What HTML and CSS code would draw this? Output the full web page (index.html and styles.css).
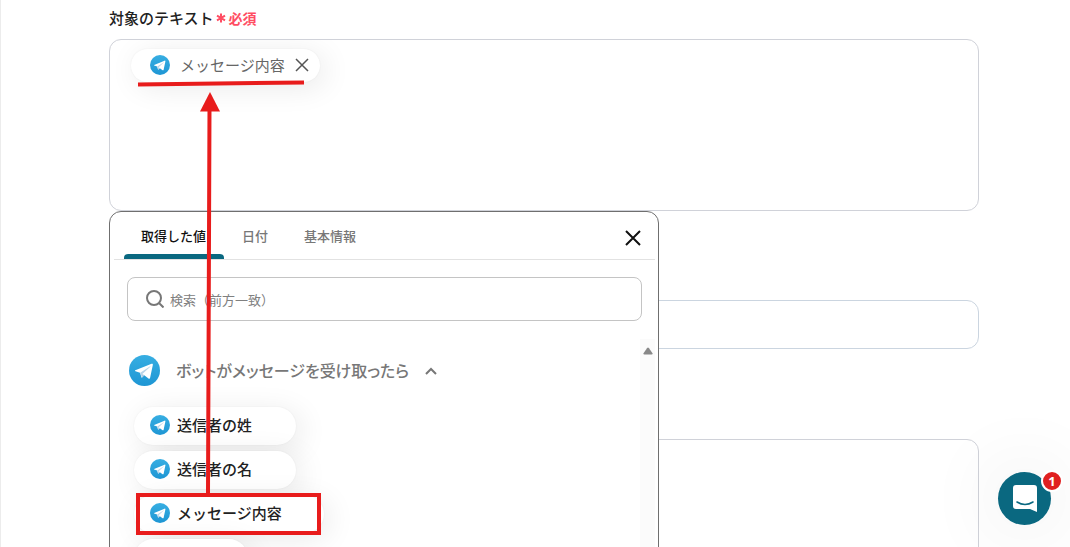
FILE: index.html
```html
<!DOCTYPE html>
<html lang="ja">
<head>
  <meta charset="UTF-8">
  <meta name="viewport" content="width=device-width, initial-scale=1.0">
  <title>対象のテキスト</title>
  <link rel="stylesheet" href="styles.css">
</head>
<body>
  <svg class="defs" aria-hidden="true">
    <defs>
      <linearGradient id="sky" x1="0" y1="0" x2="0" y2="1">
        <stop offset="0" stop-color="#37aee2"/>
        <stop offset="1" stop-color="#1e96d4"/>
      </linearGradient>
      <symbol id="telegram" viewBox="0 0 32 32">
        <circle cx="16" cy="16" r="16" fill="url(#sky)"/>
        <path d="M6.5 15.8 23.3 9c1-.3 1.500.2 1.300 1.200L21.800 23.500c-.2 1-.8 1.200-1.700.7L15.800 21l-2.200 2.200c-.3.300-.6.300-.8-.2l-1.400-4.800-4.700-1.500c-.7-.3-.7-.6-.2-.9z" fill="#fff"/>
        <path d="M11.600 18.200 21.500 11.800c.5-.3.8-.1.500.2L13.800 19.500 13.200 23.200z" fill="#b9d4e8"/>
        <path d="M13.800 19.500 15.800 21 13.200 23.200z" fill="#a3c5df"/>
      </symbol>
    </defs>
  </svg>

  <main class="form">
    <div class="label-row">
      <label for="target-search">対象のテキスト</label>
      <span class="required"><svg viewBox="0 0 10 10"><path d="M5 .5v9M1 2.700l8 4.600M9 2.700 1 7.300"/></svg>必須</span>
    </div>

    <div class="field">
      <div class="box editor">
        <div class="chip chip-selected">
          <svg class="chip-icon"><use href="#telegram"/></svg>
          <span>メッセージ内容</span>
          <button class="chip-remove" type="button" aria-label="削除">
            <svg viewBox="0 0 14 14"><path d="M1 1l12 12M13 1 1 13"/></svg>
          </button>
        </div>
      </div>

      <div class="panel">
        <div class="tabs">
          <button class="tab active" type="button">取得した値</button>
          <button class="tab" type="button">日付</button>
          <button class="tab" type="button">基本情報</button>
          <button class="close" type="button" aria-label="閉じる">
            <svg viewBox="0 0 16 16"><path d="M1 1l14 14M15 1 1 15"/></svg>
          </button>
        </div>
        <div class="search">
          <svg viewBox="0 0 18 18"><circle cx="8" cy="8" r="7"/><path d="M13 13l4.500 4.500"/></svg>
          <input id="target-search" type="text" placeholder="検索（前方一致）">
        </div>
        <div class="values">
          <div class="list">
            <button class="group" type="button">
              <svg class="group-icon"><use href="#telegram"/></svg>
              <span>ボットがメッセージを受け取ったら</span>
              <svg class="chevron" viewBox="0 0 12 8"><path d="M1 7l5-5 5 5"/></svg>
            </button>
            <button class="chip" type="button"><svg class="chip-icon"><use href="#telegram"/></svg>送信者の姓</button>
            <button class="chip" type="button"><svg class="chip-icon"><use href="#telegram"/></svg>送信者の名</button>
            <button class="chip" type="button"><svg class="chip-icon"><use href="#telegram"/></svg>メッセージ内容</button>
            <button class="chip chip-short" type="button" aria-label="値"><svg class="chip-icon"><use href="#telegram"/></svg></button>
          </div>
          <div class="scrollbar"><svg viewBox="0 0 10 8"><path d="M4 1.200q1-1.400 2 0l3.500 5q.5 1.300-.8 1.300H1.300Q0 7.500.5 6.200z"/></svg></div>
        </div>
      </div>
    </div>

    <input class="box line" type="text" aria-label="テキスト">
    <textarea class="box area" aria-label="内容"></textarea>
  </main>

  <button class="messenger" type="button" aria-label="チャット">
    <svg viewBox="0 0 24 27"><path d="M3 0h18q3 0 3 3v24l-7-3H3q-3 0-3-3V3q0-3 3-3z" fill="#fff"/><path d="M4 17q8 5 16 0" fill="none" stroke="#0a6880" stroke-width="1.500" stroke-linecap="round"/></svg>
    <span class="badge">1</span>
  </button>

  <!-- red guide marks over the form -->
  <svg class="marks" width="400" height="547" viewBox="0 0 400 547" aria-hidden="true">
    <path d="M138 84.500 304 82.500M209.500 108 208 494" stroke-width="4"/>
    <path class="head" d="M210 92l10 19.500h-20z"/>
    <rect x="138" y="495" width="181" height="38" stroke-width="4"/>
  </svg>
</body>
</html>
```
FILE: styles.css
```css
* {
  box-sizing: border-box;
}

body {
  position: relative;
  height: 100vh;
  margin: 0;
  overflow: hidden;
  border-left: 1px solid #ececec;
  background: #fff;
  color: #222;
  font-family: "Noto Sans CJK JP", sans-serif;
  font-size: 15px;
  line-height: 22px;
}

button {
  margin: 0;
  padding: 0;
  border: 0;
  background: none;
  font: inherit;
  color: inherit;
  cursor: pointer;
}

svg {
  display: block;
  flex: none;
  fill: none;
  stroke: currentColor;
}

.defs {
  position: absolute;
  width: 0;
  height: 0;
}

.form {
  display: flex;
  flex-direction: column;
  padding: 7px 91px 0 108px;
}

.label-row {
  display: flex;
  align-items: center;
  gap: 2px;
  margin-bottom: 10px;
  font-weight: 500;
}

.required {
  display: flex;
  align-items: center;
  gap: 3px;
  color: #ff4d63;
  font-size: 14px;
  font-weight: 700;
}

.required svg {
  width: 10px;
  height: 10px;
  stroke-width: 2;
}

.field {
  position: relative;
  margin-bottom: 89px;
}

.box {
  display: block;
  width: 100%;
  border: 1px solid #d0d2d9;
  border-radius: 12px;
  background: #fff;
}

.editor {
  height: 172px;
  padding: 9px 21px;
  overflow: hidden;
}

.line {
  height: 49px;
  margin-bottom: 90px;
  border-color: #cbd5e0;
}

.area {
  height: 172px;
  resize: none;
}

.chip {
  display: flex;
  align-items: center;
  gap: 7px;
  width: fit-content;
  min-width: 162px;
  height: 38px;
  padding: 0 42px 2px 16px;
  border-radius: 20px;
  background: #fff;
  box-shadow: 0 0 2px rgba(0, 0, 0, 0.06), 5px 5px 30px rgba(0, 0, 0, 0.09);
  font-weight: 500;
}

.chip-icon {
  width: 20px;
  height: 20px;
  stroke: none;
}

.chip-selected {
  height: 33px;
  padding: 0 11px 2px 19px;
  gap: 10px;
  color: #666;
  font-weight: 400;
}

.chip-remove {
  color: #555;
}

.chip-remove svg {
  width: 14px;
  height: 14px;
  stroke-width: 1.5;
}

.chip-short {
  min-width: 114px;
}

.panel {
  position: absolute;
  top: 172px;
  left: 0;
  z-index: 1;
  width: 550px;
  height: 380px;
  padding: 0 3px 0 4px;
  overflow: hidden;
  border: 1px solid #6f6f6f;
  border-radius: 12px;
  background: #fff;
}

.tabs {
  display: flex;
  height: 48px;
  padding: 0 14px 0 10px;
  border-bottom: 1px solid #e2e2e2;
  font-size: 13px;
}

.tab {
  padding: 0 18px;
  color: #777;
  font-weight: 500;
}

.tab.active {
  position: relative;
  padding: 0 18px 0 17px;
  color: #111;
}

.tab.active::after {
  position: absolute;
  right: 0;
  bottom: 0;
  left: 0;
  height: 5px;
  border-radius: 4px 4px 0 0;
  background: #0a6880;
  content: "";
}

.close {
  margin-left: auto;
  padding-top: 4px;
  color: #111;
}

.close svg {
  width: 16px;
  height: 16px;
  stroke-width: 2;
}

.search {
  display: flex;
  align-items: center;
  gap: 6px;
  height: 44px;
  margin: 17px 13px 0;
  padding: 0 18px;
  border: 1px solid #c4c4c4;
  border-radius: 8px;
  color: #777;
}

.search svg {
  width: 18px;
  height: 18px;
  stroke-width: 2;
}

.search input {
  flex: 1;
  padding: 0;
  border: 0;
  outline: 0;
  font-family: inherit;
  font-size: 13px;
}

.search input::placeholder {
  color: #808080;
  opacity: 1;
}

.values {
  display: flex;
  margin-top: 18px;
}

.list {
  display: flex;
  flex: 1;
  flex-direction: column;
  gap: 6px;
  padding: 16px 0 0 20px;
}

.group {
  display: flex;
  align-items: center;
  width: fit-content;
  gap: 16px;
  margin: 0 0 15px -5px;
  color: #777;
  font-size: 16px;
  font-weight: 500;
  font-feature-settings: "palt";
}

.group span {
  padding-bottom: 2px;
}

.group-icon {
  width: 31px;
  height: 31px;
  stroke: none;
}

.chevron {
  width: 12px;
  height: 8px;
  stroke-width: 2;
}

.scrollbar {
  width: 15px;
  padding: 8px 3px;
  background: #fbfbfb;
}

.scrollbar svg {
  width: 10px;
  height: 8px;
  fill: #888;
  stroke: none;
}

.messenger {
  position: absolute;
  right: 19px;
  bottom: 22px;
  z-index: 2;
  display: flex;
  align-items: center;
  justify-content: center;
  width: 53px;
  height: 53px;
  border-radius: 50%;
  background: #0a6880;
  box-shadow: 0 0 80px rgba(0, 0, 0, 0.12);
}

.messenger svg {
  width: 24px;
  height: 27px;
  stroke: none;
}

.badge {
  position: absolute;
  top: -2px;
  right: -12px;
  width: 22px;
  height: 22px;
  border: 2px solid #fff;
  border-radius: 50%;
  background: #e02020;
  color: #fff;
  font-family: "Open Sans", sans-serif;
  font-size: 13px;
  font-weight: 700;
  line-height: 18px;
}

.marks {
  position: absolute;
  top: 0;
  left: -1px;
  z-index: 3;
  stroke: #e81c1c;
  pointer-events: none;
}

.marks .head {
  fill: #e81c1c;
  stroke: none;
}
```
